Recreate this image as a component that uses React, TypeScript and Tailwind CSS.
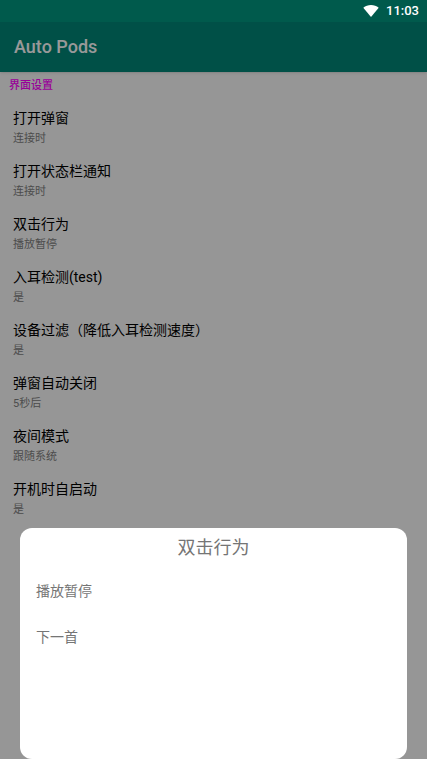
import { useState } from 'react';

interface Setting {
    title: string;
    value: string;
}

const SETTINGS: Setting[] = [
    { title: '打开弹窗', value: '连接时' },
    { title: '打开状态栏通知', value: '连接时' },
    { title: '双击行为', value: '播放暂停' },
    { title: '入耳检测(test)', value: '是' },
    { title: '设备过滤（降低入耳检测速度）', value: '是' },
    { title: '弹窗自动关闭', value: '5秒后' },
    { title: '夜间模式', value: '跟随系统' },
    { title: '开机时自启动', value: '是' },
];

const TAP_ACTIONS = ['播放暂停', '下一首'];

/** System status bar, stays above the dimmed page */
function StatusBar() {
    return (
        <div className="relative z-20 flex h-[22px] items-center justify-end gap-[7px] bg-[#005a4c] pr-2 text-white">
            <svg viewBox="0 0 16 12" className="h-3 w-4" fill="currentColor" aria-hidden="true">
                <path d="M8 12 0.3 2.7C2.5 0.9 5.1 0 8 0s5.5 0.9 7.7 2.7Z" />
            </svg>
            <span className="text-[13px] leading-4 font-medium">11:03</span>
        </div>
    );
}

function SettingRow({ title, value, onClick }: Setting & { onClick: () => void }) {
    return (
        <button onClick={onClick} className="flex h-[53px] w-full flex-col justify-center px-[13px] text-left">
            <span className="text-sm leading-5 text-black">{title}</span>
            <span className="text-[11px] leading-[22px] text-[#808080]">{value}</span>
        </button>
    );
}

/** Bottom sheet with the choices for one setting */
function ActionSheet({ title, options, onSelect }: { title: string; options: string[]; onSelect: (option: string) => void }) {
    return (
        <div className="fixed inset-0 z-10 flex items-end bg-black/40 px-5">
            <section
                role="dialog"
                aria-label={title}
                className="min-h-[231px] w-full rounded-xl bg-white text-[#757575]"
            >
                <h2 className="py-2 text-center text-lg leading-6">{title}</h2>
                {options.map((option) => (
                    <button
                        key={option}
                        onClick={() => onSelect(option)}
                        className="block h-[46px] w-full px-4 text-left text-sm"
                    >
                        {option}
                    </button>
                ))}
            </section>
        </div>
    );
}

export default function App() {
    const [settings, setSettings] = useState(SETTINGS);
    const [sheetOpen, setSheetOpen] = useState(true);

    const handleSelect = (option: string) => {
        setSettings(settings.map((s) => (s.title === '双击行为' ? { ...s, value: option } : s)));
        setSheetOpen(false);
    };

    return (
        <div className="min-h-screen bg-[#fafafa] font-[Roboto,'Noto_Sans_CJK_SC',sans-serif]">
            <StatusBar />
            <header className="flex h-[50px] items-center bg-[#008577] px-[14px] shadow">
                <h1 className="text-lg font-medium text-white">Auto Pods</h1>
            </header>
            <main>
                <h2 className="px-[9px] pt-1 text-[11px] leading-5 font-medium text-[#ff00ff]">界面设置</h2>
                <div className="pt-[6px]">
                    {settings.map((s) => (
                        <SettingRow key={s.title} {...s} onClick={() => setSheetOpen(s.title === '双击行为')} />
                    ))}
                </div>
            </main>
            {sheetOpen && <ActionSheet title="双击行为" options={TAP_ACTIONS} onSelect={handleSelect} />}
        </div>
    );
}
